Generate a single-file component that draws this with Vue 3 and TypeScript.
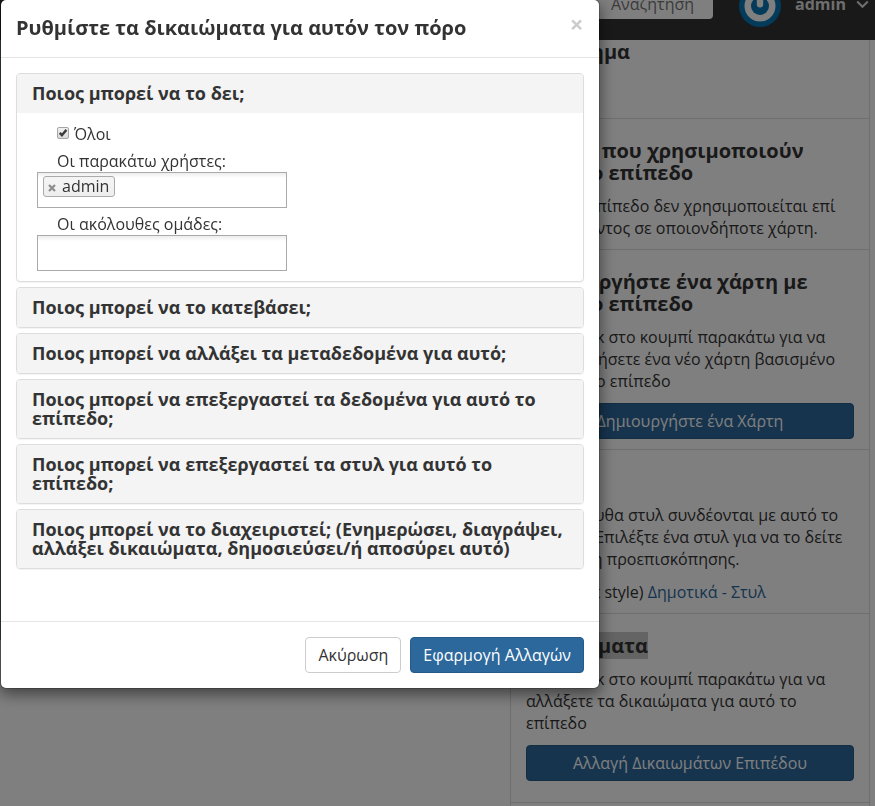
<script setup lang="ts">
import { ref } from 'vue'

interface Panel {
  title: string
  open?: boolean
}

const everyone = ref(true)
const users = ref<string[]>(['admin'])
const panels: Panel[] = [
  { title: 'Ποιος μπορεί να το δει;', open: true },
  { title: 'Ποιος μπορεί να το κατεβάσει;' },
  { title: 'Ποιος μπορεί να αλλάξει τα μεταδεδομένα για αυτό;' },
  { title: 'Ποιος μπορεί να επεξεργαστεί τα δεδομένα για αυτό το επίπεδο;' },
  { title: 'Ποιος μπορεί να επεξεργαστεί τα στυλ για αυτό το επίπεδο;' },
  { title: 'Ποιος μπορεί να το διαχειριστεί; (Ενημερώσει, διαγράψει, αλλάξει δικαιώματα, δημοσιεύσει/ή αποσύρει αυτό)' },
]
</script>

<template>
  <div class="page">
    <header class="navbar">
      <div class="search">Αναζήτηση</div>
      <svg class="avatar" width="42" height="42" viewBox="0 0 42 42">
        <circle cx="21" cy="21" r="21" fill="#0874b4" />
        <circle cx="21" cy="21" r="15.5" fill="#fff" />
        <circle cx="21" cy="21" r="9" fill="#0874b4" />
        <rect x="17.8" y="5.5" width="6.4" height="17" rx="3.2" fill="#fff" />
      </svg>
      <span class="account">admin</span>
      <svg class="caret" width="13" height="9" viewBox="0 0 13 9">
        <path d="M1.2 1.5 L6.5 6.8 L11.8 1.5" fill="none" stroke="#ddd" stroke-width="2" />
      </svg>
    </header>

    <main class="content">
      <div class="map"></div>
      <ul class="list">
        <li class="item first">
          <h4>Υπόμνημα</h4>
        </li>
        <li class="item">
          <h4>Χάρτες που χρησιμοποιούν<br />αυτό το επίπεδο</h4>
          <p>Αυτό το επίπεδο δεν χρησιμοποιείται επί<br />του παρόντος σε οποιονδήποτε χάρτη.</p>
        </li>
        <li class="item">
          <h4>Δημιουργήστε ένα χάρτη με<br />αυτό το επίπεδο</h4>
          <p>Κάντε κλικ στο κουμπί παρακάτω για να<br />δημιουργήσετε ένα νέο χάρτη βασισμένο<br />σε αυτό το επίπεδο</p>
          <button class="btn primary block">Δημιουργήστε ένα Χάρτη</button>
        </li>
        <li class="item">
          <h4>Στυλ</h4>
          <p>Τα ακόλουθα στυλ συνδέονται με αυτό το<br />επίπεδο. Επιλέξτε ένα στυλ για να το δείτε<br />στο χάρτη προεπισκόπησης.</p>
          <p class="style-row">(default style) <a>Δημοτικά - Στυλ</a></p>
        </li>
        <li class="item permissions">
          <h4><span class="selected">Δικαιώματα</span></h4>
          <p>Κάντε κλικ στο κουμπί παρακάτω για να<br />αλλάξετε τα δικαιώματα για αυτό το<br />επίπεδο</p>
          <button class="btn primary block">Αλλαγή Δικαιωμάτων Επιπέδου</button>
        </li>
        <li class="item"></li>
      </ul>
    </main>

    <div class="backdrop"></div>

    <section class="modal" role="dialog">
      <div class="modal-header">
        <h3>Ρυθμίστε τα δικαιώματα για αυτόν τον πόρο</h3>
        <button class="close">×</button>
      </div>
      <div class="modal-body">
        <div v-for="panel in panels" :key="panel.title" class="panel">
          <div class="panel-heading">{{ panel.title }}</div>
          <div v-if="panel.open" class="panel-body">
            <label class="check">
              <svg width="13" height="13" viewBox="0 0 13 13" @click="everyone = !everyone">
                <defs>
                  <linearGradient id="box" x1="0" y1="0" x2="0" y2="1">
                    <stop offset="0" stop-color="#f2f2f2" />
                    <stop offset="1" stop-color="#d9d9d9" />
                  </linearGradient>
                </defs>
                <rect x="0.5" y="0.5" width="11" height="11" rx="1.5" fill="url(#box)" stroke="#a5a5a5" />
                <path v-if="everyone" d="M2.7 5.9 L4.9 8.2 L9.4 2.9" fill="none" stroke="#3c3c3c" stroke-width="2.4" />
              </svg>
              <span>Όλοι</span>
            </label>
            <div class="label">Οι παρακάτω χρήστες:</div>
            <div class="select">
              <span v-for="user in users" :key="user" class="chip">
                <svg width="8" height="8" viewBox="0 0 8 8">
                  <path d="M1 1 L7 7 M7 1 L1 7" stroke="#8c8c8c" stroke-width="2.2" />
                </svg>
                <span class="chip-text">{{ user }}</span>
              </span>
            </div>
            <div class="label groups">Οι ακόλουθες ομάδες:</div>
            <div class="select"></div>
          </div>
        </div>
      </div>
      <div class="modal-footer">
        <button class="btn cancel">Ακύρωση</button>
        <button class="btn primary">Εφαρμογή Αλλαγών</button>
      </div>
    </section>
  </div>
</template>

<style>
body {
  margin: 0;
  background: #fff;
  overflow: hidden;
}
</style>

<style scoped>
* {
  box-sizing: border-box;
}
.page {
  height: 806px;
  overflow: hidden;
  font: 400 16px/22px "Open Sans", "Noto Sans", sans-serif;
  color: #333;
}
h3,
h4,
p {
  margin: 0;
}
.navbar {
  height: 40px;
  background: #333;
  display: flex;
  align-items: flex-start;
  justify-content: flex-end;
  padding-right: 6px;
}
.search {
  width: 140px;
  height: 34px;
  margin: -15px 26px 0 0;
  padding: 8px 0 0 38px;
  line-height: 22px;
  border-radius: 4px;
  background: #fff;
  color: #777;
  font-weight: 400;
  white-space: nowrap;
}
.avatar {
  margin: -15px 14px 0 0;
}
.account {
  width: 51px;
  margin: -7px 10px 0 0;
  font-weight: 700;
  color: #ddd;
}
.caret {
  margin-top: 0;
}
.content {
  display: flex;
  justify-content: space-between;
  align-items: flex-start;
  height: 766px;
  padding-right: 5px;
}
.map {
  width: 480px;
  height: 600px;
  background: #7c929d;
}
.list {
  width: 360px;
  margin: 0;
  padding: 0;
  list-style: none;
  border: solid #ddd;
  border-width: 0 1px;
  flex: none;
}
.item {
  padding: 21px 15px 10px;
  border-top: 1px solid #ddd;
  white-space: nowrap;
}
.item.first {
  height: 78px;
  padding-top: 1px;
  border-top: 0;
}
.item.permissions {
  padding-bottom: 21px;
}
h4 {
  font-size: 20px;
  line-height: 22px;
  font-weight: 700;
  margin-bottom: 11px;
}
p + p,
p + .btn {
  margin-top: 11px;
}
.style-row {
  padding-left: 17px;
}
a {
  color: #2c689c;
}
.selected {
  background: #c8c8c8;
}
.btn {
  height: 36px;
  padding: 6px 12px;
  border: 1px solid #ccc;
  border-radius: 4px;
  background: #fff;
  color: #333;
  font: inherit;
  white-space: nowrap;
}
.btn.primary {
  background: #2c689c;
  border-color: #265a87;
  color: #fff;
  font-weight: 400;
}
.btn.block {
  display: block;
  width: 100%;
}
.backdrop {
  position: fixed;
  inset: 0;
  background: rgba(0, 0, 0, 0.5);
}
.modal {
  position: fixed;
  left: 0;
  top: -1px;
  width: 600px;
  height: 690px;
  display: flex;
  flex-direction: column;
  background: #fff;
  background-clip: padding-box;
  border: 1px solid rgba(0, 0, 0, 0.2);
  border-radius: 6px;
  box-shadow: 0 5px 15px rgba(0, 0, 0, 0.5);
}
.modal-header {
  height: 58px;
  padding: 17px 15px 0;
  display: flex;
  justify-content: space-between;
  border-bottom: 1px solid #e5e5e5;
}
h3 {
  font-size: 20px;
  line-height: 22px;
  font-weight: 700;
}
.close {
  width: 15px;
  height: 22px;
  margin-top: -4px;
  padding: 0;
  border: 0;
  background: none;
  color: #ccc;
  font: 700 24px/22px "Open Sans", sans-serif;
}
.modal-body {
  flex: 1;
  padding: 15px;
  display: flex;
  flex-direction: column;
  gap: 5px;
}
.panel {
  border: 1px solid #ddd;
  border-radius: 4px;
  box-shadow: 0 1px 1px rgba(0, 0, 0, 0.05);
  overflow: hidden;
  flex: none;
}
.panel-heading {
  padding: 10px 15px;
  background: #f4f4f4;
  font-size: 18px;
  line-height: 19px;
  font-weight: 700;
}
.panel-body {
  height: 168px;
  padding: 10px 20px;
}
.check {
  display: flex;
  align-items: center;
  gap: 4px;
  height: 22px;
  padding-left: 20px;
}
.check svg {
  margin-top: -1px;
}
.label {
  height: 22px;
  margin-top: 5px;
  padding-left: 20px;
}
.select {
  width: 250px;
  height: 36px;
  padding: 3px 5px;
  border: 1px solid #aaa;
  background: linear-gradient(#eee 1%, #fff 15%);
}
.chip {
  display: inline-flex;
  align-items: center;
  gap: 6px;
  height: 21px;
  padding: 0 5px 0 4px;
  border: 1px solid #aaa;
  border-radius: 3px;
  background: linear-gradient(#f4f4f4 20%, #eee);
  vertical-align: top;
}
.chip svg {
  margin-top: 3px;
}
.chip-text {
  line-height: 20px;
  padding-bottom: 2px;
}
.modal-footer {
  height: 67px;
  padding: 15px;
  display: flex;
  justify-content: flex-end;
  gap: 9px;
  border-top: 1px solid #e5e5e5;
}
</style>
